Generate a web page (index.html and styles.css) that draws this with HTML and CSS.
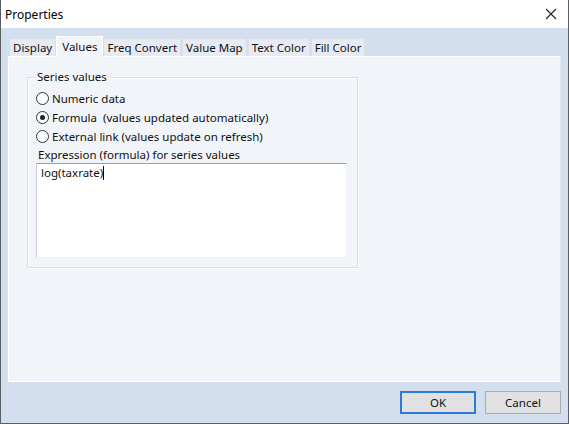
FILE: index.html
```html
<!DOCTYPE html>
<html>
<head>
<meta charset="utf-8">
<link rel="stylesheet" href="styles.css">
</head>
<body>
<div class="window">
  <div class="titlebar">
    <span class="title">Properties</span>
    <svg class="close" width="12" height="12" viewBox="0 0 12 12"><path d="M1 1 L11 11 M11 1 L1 11" stroke="#222" stroke-width="1.1" fill="none"/></svg>
  </div>
  <div class="client">
    <div class="tabs">
      <div class="tab">Display</div>
      <div class="tab active">Values</div>
      <div class="tab">Freq Convert</div>
      <div class="tab">Value Map</div>
      <div class="tab">Text Color</div>
      <div class="tab">Fill Color</div>
    </div>
    <div class="panel">
      <fieldset class="group">
        <legend>Series values</legend>
        <label class="radio"><span class="dot"></span>Numeric data</label>
        <label class="radio"><span class="dot on"></span>Formula&nbsp; (values updated automatically)</label>
        <label class="radio"><span class="dot"></span>External link (values update on refresh)</label>
        <div class="exprlabel">Expression (formula) for series values</div>
        <div class="textarea">log(taxrate)<span class="caret"></span></div>
      </fieldset>
    </div>
    <div class="buttons">
      <button class="btn default">OK</button>
      <button class="btn">Cancel</button>
    </div>
  </div>
</div>
</body>
</html>
```
FILE: styles.css
```css
html, body {
  margin: 0;
  padding: 0;
}
body {
  font-family: "Noto Sans", "Open Sans", sans-serif;
  font-size: 11.5px;
  color: #111;
  width: 569px;
  height: 424px;
  overflow: hidden;
}
.window {
  width: 569px;
  height: 424px;
  box-sizing: border-box;
  border-left: 1px solid #5a5f66;
  border-right: 1px solid #5a5f66;
  border-bottom: 1px solid #5a5f66;
  display: flex;
  flex-direction: column;
}
.titlebar {
  height: 28px;
  background: #fff;
  display: flex;
  align-items: center;
  justify-content: space-between;
  padding: 0 11px 0 4px;
  flex: none;
}
.title {
  font-size: 12px;
  color: #000;
}
.close {
  display: block;
}
.client {
  flex: 1;
  background: #d3deef;
  display: flex;
  flex-direction: column;
  padding: 7px 7px 0 7px;
}
.tabs {
  display: flex;
  align-items: flex-end;
  height: 21px;
  padding-left: 1px;
}
.tab {
  height: 18px;
  line-height: 17px;
  padding: 0 3px;
  background: #e6ebf3;
  border: 1px solid #d9dfe9;
  border-bottom: none;
  margin-right: 1px;
  box-sizing: border-box;
  color: #111;
  font-size: 11.5px;
}
.tab.active {
  height: 21px;
  line-height: 20px;
  background: #f1f4f9;
  border-color: #fff;
  margin: 0 0 -1px -1px;
  padding: 0 5px;
  position: relative;
  z-index: 1;
}
.panel {
  height: 326px;
  background: #f1f4f9;
  border: 1px solid #fff;
  border-right-color: #e2e7ef;
  border-bottom-color: #fff;
  box-sizing: border-box;
  padding: 13px 0 0 18px;
}
.group {
  margin: 0;
  width: 331px;
  height: 198px;
  box-sizing: border-box;
  border: 1px solid #d8dde6;
  box-shadow: inset 1px 1px 0 #fff, 1px 1px 0 #fff;
  padding: 0 0 0 8px;
}
.group legend {
  padding: 0 1px;
  margin-left: 0;
  font-size: 11.5px;
  line-height: 14px;
}
.radio {
  display: flex;
  align-items: center;
  height: 19px;
  white-space: nowrap;
}
.radio:first-of-type {
  margin-top: 5px;
}
.dot {
  width: 11px;
  height: 11px;
  border: 1px solid #333;
  border-radius: 50%;
  background: #fff;
  margin-right: 3px;
  position: relative;
  flex: none;
}
.dot.on::after {
  content: "";
  position: absolute;
  left: 3px;
  top: 3px;
  width: 5px;
  height: 5px;
  border-radius: 50%;
  background: #222;
}
.exprlabel {
  margin-top: 1px;
  padding-left: 2px;
  height: 15px;
  line-height: 15px;
}
.textarea {
  width: 311px;
  height: 95px;
  box-sizing: border-box;
  margin-top: 1px;
  background: #fff;
  border-top: 1px solid #9aa0a8;
  border-left: 1px solid #c8ccd2;
  border-right: 1px solid #eef1f6;
  border-bottom: 1px solid #eef1f6;
  padding: 1px 4px;
  line-height: 15px;
}
.caret {
  display: inline-block;
  width: 1px;
  height: 14px;
  background: #000;
  vertical-align: -3px;
}
.buttons {
  display: flex;
  justify-content: flex-end;
  gap: 9px;
  padding: 9px 0 0 0;
}
.btn {
  width: 76px;
  height: 23px;
  font-family: inherit;
  font-size: 11.5px;
  background: #e1e1e1;
  border: 1px solid #adadad;
  padding: 0;
  color: #111;
}
.btn.default {
  border: 2px solid #2f7ad6;
}
```
